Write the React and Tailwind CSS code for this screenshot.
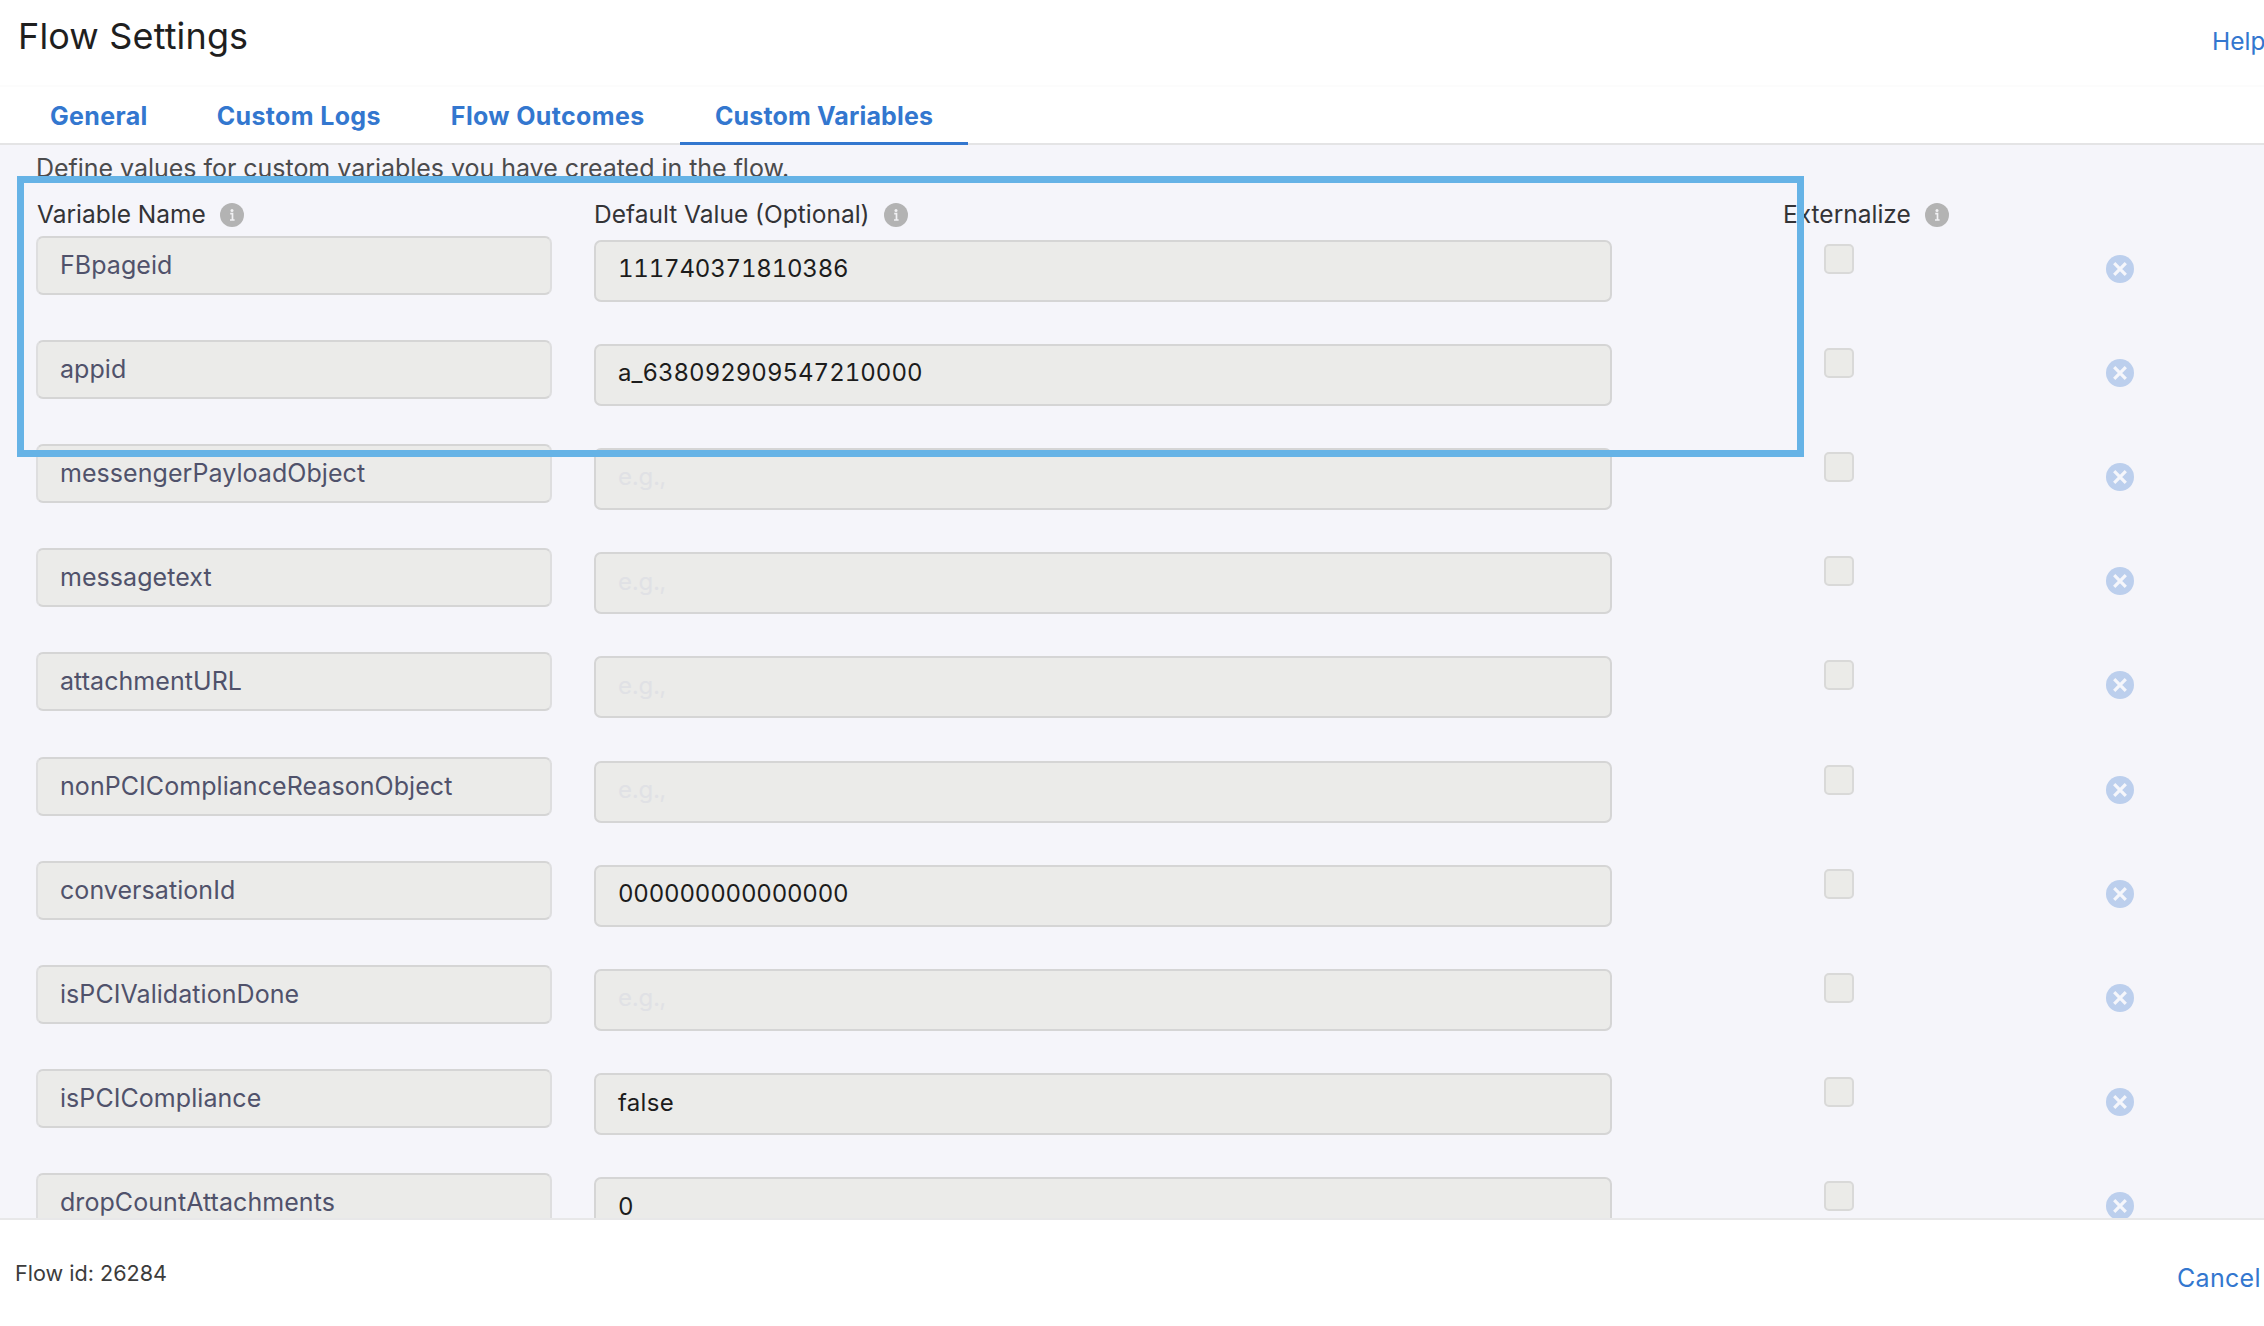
const TABS = [
    { label: 'General', className: 'ml-[50px]' },
    { label: 'Custom Logs', className: 'ml-[69px]' },
    { label: 'Flow Outcomes', className: 'ml-[70px]' },
    { label: 'Custom Variables', className: 'ml-[35px] w-72 pl-px tracking-[0.15px]', active: true },
];

const VARIABLES = [
    { name: 'FBpageid', value: '111740371810386', tracking: '-tracking-[0.2px]' },
    { name: 'appid', value: 'a_638092909547210000', tracking: 'tracking-normal' },
    { name: 'messengerPayloadObject', value: '' },
    { name: 'messagetext', value: '' },
    { name: 'attachmentURL', value: '' },
    { name: 'nonPCIComplianceReasonObject', value: '' },
    { name: 'conversationId', value: '000000000000000', tracking: '-tracking-[0.2px]' },
    { name: 'isPCIValidationDone', value: '' },
    { name: 'isPCICompliance', value: 'false', tracking: 'tracking-[0.3px]' },
    { name: 'dropCountAttachments', value: '0', tracking: 'tracking-normal' },
];

function InfoIcon() {
    return (
        <svg viewBox="0 0 24 24" className="mt-0.5 h-6 w-6 flex-shrink-0">
            <circle cx="12" cy="12" r="12" fill="#b3b3b3" />
            <path d="M10.2 10.6h2.3v6.2M10 17h4.6" fill="none" stroke="#f1f1f3" strokeWidth="1.7" />
            <circle cx="12" cy="7.4" r="1.5" fill="#f1f1f3" />
        </svg>
    );
}

function RemoveIcon() {
    return (
        <svg viewBox="0 0 28 28" className="h-7 w-7">
            <circle cx="14" cy="14" r="14" fill="#bccfed" />
            <path d="M8.2 8.2l11.6 11.6M19.8 8.2L8.2 19.8" stroke="#f5f6fb" strokeWidth="3.2" />
        </svg>
    );
}

function ColumnHeader({ label }) {
    return (
        <div className="flex h-8 items-center gap-[14px] text-[24.5px] text-[#333336]">
            <span>{label}</span>
            <InfoIcon />
        </div>
    );
}

function VariableRow({ name, value, tracking }) {
    return (
        <div className="grid h-[104.2px] flex-shrink-0 grid-cols-[558px_1230px_282px_28px] items-start">
            <div className="flex h-[59px] w-[516px] items-center rounded-[7px] border-2 border-x-[#dededf] border-y-[#d5d5d5] bg-[#ebebe9] pb-px pl-[22px] text-[25px] tracking-[0.06px] text-[#50526b]">
                {name}
            </div>
            <div className="mt-1 flex h-[62px] w-[1018px] items-center rounded-[7px] border-2 border-[#d5d5d5] bg-[#ebebe9] pb-[3px] pl-[22px] text-[#1c1c1c] tabular-nums">
                {value ? (
                    <span className={tracking}>{value}</span>
                ) : (
                    <span className="text-[#e0e1e5]">e.g.,</span>
                )}
            </div>
            <div className="mt-2 h-[30px] w-[30px] rounded-[5px] border-2 border-[#d9d9d8] bg-[#ebebe8]" />
            <button className="mt-[19px]">
                <RemoveIcon />
            </button>
        </div>
    );
}

export default function App() {
    return (
        <div className="relative flex h-[1326px] w-[2264px] flex-col overflow-hidden bg-white font-['Inter',sans-serif] text-2xl leading-8">
            {/* Header */}
            <header className="flex h-[87px] flex-shrink-0 items-start justify-between border-b-2 border-[#fcfcfc] pl-[18px]">
                <h1 className="pt-[14px] text-[36px] leading-[44px] tracking-[0.15px] text-[#1f1f1f]">Flow Settings</h1>
                <a className="w-[52px] pt-[25px] text-[24.5px] whitespace-nowrap text-[#3377cf]">Help</a>
            </header>

            {/* Tabs */}
            <nav className="flex h-[58px] flex-shrink-0 border-b-2 border-[#e4e4e5] text-[25px] font-bold tracking-[0.35px] text-[#3377cf]">
                {TABS.map((tab) => (
                    <div
                        key={tab.label}
                        className={`h-[59px] whitespace-nowrap pt-[13px] ${tab.className} ${tab.active ? 'border-b-4 border-[#3377cf] text-center' : ''}`}
                    >
                        {tab.label}
                    </div>
                ))}
            </nav>

            {/* Variables */}
            <main className="flex min-h-0 flex-1 flex-col overflow-hidden bg-[#f5f5fa] pl-9">
                <p className="mt-[7px] flex-shrink-0 text-[25px] tracking-[-0.03px] text-[#4b4b4d]">
                    Define values for custom variables you have created in the flow.
                </p>
                <div className="mt-[14px] mb-[5.6px] grid flex-shrink-0 grid-cols-[557px_1189px_1fr] pl-px">
                    <ColumnHeader label="Variable Name" />
                    <ColumnHeader label="Default Value (Optional)" />
                    <ColumnHeader label="Externalize" />
                </div>
                {VARIABLES.map((variable) => (
                    <VariableRow key={variable.name} {...variable} />
                ))}
            </main>

            {/* Footer */}
            <footer className="flex h-[108px] flex-shrink-0 items-start justify-between border-t-2 border-[#e8e8e9] pl-[15px]">
                <span className="pt-[37px] text-[21.6px] text-[#3c3c3c]">Flow id: 26284</span>
                <a className="w-[87px] pt-[42px] text-[25px] whitespace-nowrap tracking-[0.3px] text-[#3377cf]">Cancel</a>
            </footer>

            {/* Highlight over the first two variables */}
            <div className="pointer-events-none absolute top-[176px] left-[17px] h-[281px] w-[1787px] border-[7px] border-[#66b3e6]" />
        </div>
    );
}
